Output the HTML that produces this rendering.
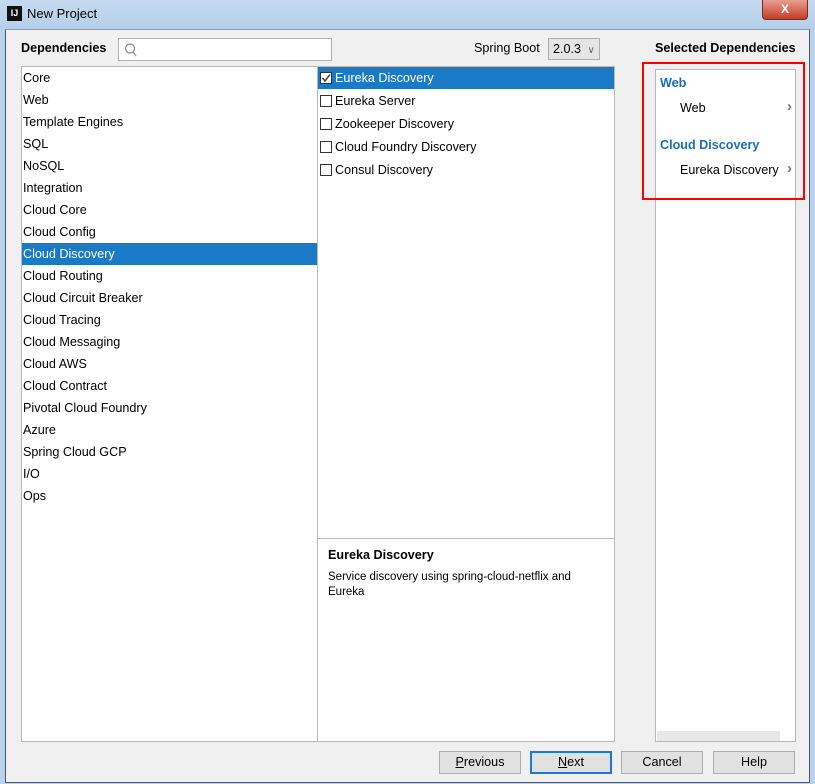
<!DOCTYPE html>
<html><head><style>
*{margin:0;padding:0;box-sizing:border-box}
body{width:815px;height:784px;overflow:hidden;background:#b9d1ea;font-family:"Liberation Sans",sans-serif;font-size:12.6px;color:#000;position:relative}
.abs{position:absolute}
.title{left:0;top:0;width:815px;height:29px;background:linear-gradient(#c5daf0,#b6cfea)}
.win{left:5px;top:29px;width:805px;height:754px;background:#f0f0f0;border:1px solid #4a5a6e;border-top:1px solid #8aa0b8}
.panel{background:#fff;border:1px solid #b8b8b8}
.row{position:absolute;left:0;right:0;height:22px;line-height:22px;padding-left:1px;white-space:nowrap}
.sel{background:#1b7ac6;color:#fff}
.cb{display:inline-block;width:12px;height:12px;border:1px solid #333;background:#fff;vertical-align:-2px;margin:0 3px 0 1px;position:relative}
.btn{position:absolute;top:751px;width:82px;height:23px;border:1px solid #adadad;background:#e1e1e1;text-align:center;line-height:21px}
.chev{color:#777;font-size:15px;font-weight:bold}
</style></head><body>
<div class="abs title"></div>
<div class="abs" style="left:7px;top:6px;width:15px;height:15px;background:#111;color:#fff;font-size:9px;font-weight:bold;line-height:15px;text-align:center">IJ</div>
<div class="abs" style="left:27px;top:6px;font-size:13px">New Project</div>
<div class="abs" style="left:762px;top:0;width:46px;height:20px;background:linear-gradient(#e8a090,#c43c28);border:1px solid #7a2a20;border-top:none;border-radius:0 0 4px 4px;color:#fff;font-weight:bold;text-align:center;line-height:19px;font-size:12px">X</div>
<div class="abs win"></div>

<div class="abs" style="left:21px;top:41px;font-weight:bold">Dependencies</div>
<div class="abs" style="left:118px;top:38px;width:214px;height:23px;background:#fff;border:1px solid #b0b0b0">
<svg width="16" height="16" style="position:absolute;left:4px;top:3px"><circle cx="7" cy="6.5" r="4.5" fill="none" stroke="#888" stroke-width="1.2"/><line x1="10" y1="10" x2="13" y2="14" stroke="#888" stroke-width="1.2"/></svg></div>
<div class="abs" style="left:474px;top:41px">Spring Boot</div>
<div class="abs" style="left:548px;top:38px;width:52px;height:22px;background:#e5e5e5;border:1px solid #adadad;padding-left:4px;line-height:20px">2.0.3 <span style="color:#666;font-size:10px;margin-left:3px">&#8744;</span></div>
<div class="abs" style="left:655px;top:41px;font-weight:bold">Selected Dependencies</div>

<div class="abs panel" style="left:21px;top:66px;width:297px;height:676px">
<div class="row" style="top:0">Core</div>
<div class="row" style="top:22px">Web</div>
<div class="row" style="top:44px">Template Engines</div>
<div class="row" style="top:66px">SQL</div>
<div class="row" style="top:88px">NoSQL</div>
<div class="row" style="top:110px">Integration</div>
<div class="row" style="top:132px">Cloud Core</div>
<div class="row" style="top:154px">Cloud Config</div>
<div class="row sel" style="top:176px">Cloud Discovery</div>
<div class="row" style="top:198px">Cloud Routing</div>
<div class="row" style="top:220px">Cloud Circuit Breaker</div>
<div class="row" style="top:242px">Cloud Tracing</div>
<div class="row" style="top:264px">Cloud Messaging</div>
<div class="row" style="top:286px">Cloud AWS</div>
<div class="row" style="top:308px">Cloud Contract</div>
<div class="row" style="top:330px">Pivotal Cloud Foundry</div>
<div class="row" style="top:352px">Azure</div>
<div class="row" style="top:374px">Spring Cloud GCP</div>
<div class="row" style="top:396px">I/O</div>
<div class="row" style="top:418px">Ops</div>
</div>

<div class="abs panel" style="left:317px;top:66px;width:298px;height:473px">
<div class="row sel" style="top:0"><span class="cb"><svg width="10" height="10" style="position:absolute;left:0;top:0"><path d="M1.5 5 L4 8 L9 1.5" fill="none" stroke="#333" stroke-width="1.4"/></svg></span>Eureka Discovery</div>
<div class="row" style="top:23px"><span class="cb"></span>Eureka Server</div>
<div class="row" style="top:46px"><span class="cb"></span>Zookeeper Discovery</div>
<div class="row" style="top:69px"><span class="cb"></span>Cloud Foundry Discovery</div>
<div class="row" style="top:92px"><span class="cb"></span>Consul Discovery</div>
</div>
<div class="abs panel" style="left:317px;top:538px;width:298px;height:204px">
<div class="abs" style="left:10px;top:9px;font-weight:bold">Eureka Discovery</div>
<div class="abs" style="left:10px;top:31px;font-size:11.5px;line-height:15px;width:270px">Service discovery using spring-cloud-netflix and Eureka</div>
</div>

<div class="abs panel" style="left:655px;top:69px;width:141px;height:673px">
<div class="abs" style="left:4px;top:6px;font-weight:bold;color:#1b6cc0">Web</div>
<div class="abs" style="left:24px;top:31px">Web</div>
<div class="abs chev" style="left:131px;top:28px">&#8250;</div>
<div class="abs" style="left:4px;top:68px;font-weight:bold;color:#1b6cc0">Cloud Discovery</div>
<div class="abs" style="left:24px;top:93px">Eureka Discovery</div>
<div class="abs chev" style="left:131px;top:90px">&#8250;</div>
<div class="abs" style="left:1px;top:661px;width:123px;height:10px;background:#e8e8e8"></div>
</div>
<div class="abs" style="left:642px;top:62px;width:163px;height:138px;border:2px solid #f00"></div>

<div class="btn" style="left:439px"><u>P</u>revious</div>
<div class="btn" style="left:530px;border:2px solid #1a7ad4;line-height:19px"><u>N</u>ext</div>
<div class="btn" style="left:621px">Cancel</div>
<div class="btn" style="left:713px">Help</div>
</body></html>
